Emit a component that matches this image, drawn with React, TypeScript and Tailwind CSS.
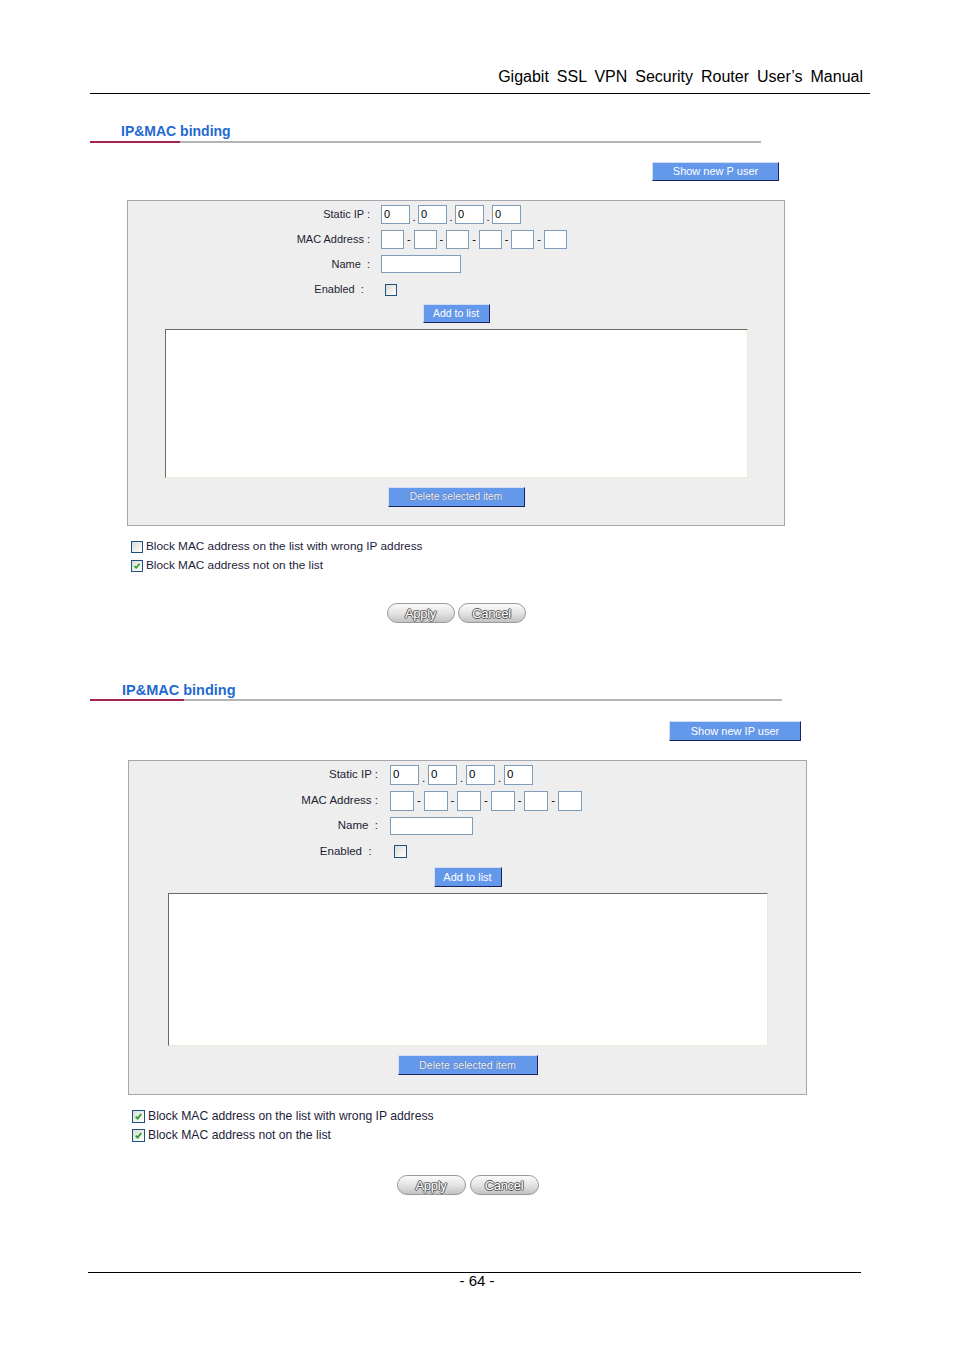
import React from "react";

type Size = {
  title: string;
  titleText: string;
  rule: string;
  red: string;
  showWrap: string;
  showBtn: string;
  showLabel: string;
  panel: string;
  label: string;
  fields: string;
  ipRow: string;
  ip: string;
  ipSep: string;
  macRow: string;
  mac: string;
  macSep: string;
  nameRow: string;
  name: string;
  enRow: string;
  chk: string;
  addWrap: string;
  addBtn: string;
  list: string;
  delWrap: string;
  delBtn: string;
  optWrap: string;
  optRow: string;
  optText: string;
  optBox: string;
  actWrap: string;
  pill: string;
};

const SMALL: Size = {
  title: "mt-[29px] w-[671px]",
  titleText: "pl-[31px] text-[14px]",
  rule: "mt-[2px]",
  red: "w-[90px]",
  showWrap: "mt-[19px] w-[689px]",
  showBtn: "h-[19px] w-[127px] text-[11px]",
  showLabel: "Show new P user",
  panel: "mt-[19px] ml-[127px] w-[658px] h-[326px] pt-[4px]",
  label: "w-[242px] text-[11px]",
  fields: "ml-[11px]",
  ipRow: "h-[19px]",
  ip: "w-[29px] h-[19px] text-[11px]",
  ipSep: "w-[8px] text-[11px]",
  macRow: "mt-[6px] h-[19px]",
  mac: "w-[23px] h-[19px]",
  macSep: "w-[9.6px] text-[11px]",
  nameRow: "mt-[6px] h-[18px]",
  name: "w-[80px] h-[18px]",
  enRow: "mt-[7px] h-[19px]",
  chk: "w-[12px] h-[12px]",
  addWrap: "mt-[5px]",
  addBtn: "h-[19px] w-[67px] text-[10.5px]",
  list: "mt-[6px] w-[583px] h-[149px]",
  delWrap: "mt-[9px]",
  delBtn: "h-[20px] w-[137px] text-[10.2px]",
  optWrap: "mt-[11px] ml-[131px]",
  optRow: "h-[19px] gap-[3px]",
  optText: "text-[11.8px]",
  optBox: "w-[12px] h-[12px]",
  actWrap: "mt-[28px] ml-[127px] w-[658px] gap-[3px]",
  pill: "h-[20px] w-[68px] text-[13px]",
};

const BIG: Size = {
  title: "mt-[59px] w-[692px]",
  titleText: "pl-[32px] text-[14.5px]",
  rule: "mt-[1px]",
  red: "w-[94px]",
  showWrap: "mt-[20px] w-[711px]",
  showBtn: "h-[20px] w-[132px] text-[11px]",
  showLabel: "Show new IP user",
  panel: "mt-[19px] ml-[128px] w-[679px] h-[335px] pt-[4px]",
  label: "w-[249px] text-[11.5px]",
  fields: "ml-[12px]",
  ipRow: "h-[20px]",
  ip: "w-[29px] h-[20px] text-[11.5px]",
  ipSep: "w-[9px] text-[11.5px]",
  macRow: "mt-[6px] h-[20px]",
  mac: "w-[24px] h-[20px]",
  macSep: "w-[9.6px] text-[11.5px]",
  nameRow: "mt-[6px] h-[18px]",
  name: "w-[83px] h-[18px]",
  enRow: "mt-[7px] h-[19px]",
  chk: "w-[13px] h-[13px]",
  addWrap: "mt-[6px]",
  addBtn: "h-[20px] w-[68px] text-[11px]",
  list: "mt-[6px] w-[600px] h-[153px]",
  delWrap: "mt-[9px]",
  delBtn: "h-[20px] w-[140px] text-[10.7px]",
  optWrap: "mt-[12px] ml-[132px]",
  optRow: "h-[19px] gap-[3px]",
  optText: "text-[12.2px]",
  optBox: "w-[13px] h-[13px]",
  actWrap: "mt-[30px] ml-[128px] w-[679px] gap-[4px]",
  pill: "h-[20px] w-[69px] text-[13px]",
};

const Check = ({ cls, checked }: { cls: string; checked?: boolean }) => (
  <span
    className={`relative inline-block shrink-0 border border-[#1c5180] bg-linear-to-br from-[#dcdcd5] to-white ${cls}`}
  >
    {checked && (
      <svg className="absolute inset-0 h-full w-full" viewBox="0 0 12 12">
        <path
          d="M3 6.2 L5 8.3 L9 3.3"
          fill="none"
          stroke="#21a121"
          strokeWidth="1.9"
        />
      </svg>
    )}
  </span>
);

const BlueBtn = ({ cls, children, dim }: { cls: string; children: React.ReactNode; dim?: boolean }) => (
  <button
    type="button"
    className={`flex items-center justify-center border border-t-[#d3def5] border-l-[#d3def5] border-r-[#17245f] border-b-[#17245f] bg-[#6498eb] leading-none ${
      dim ? "text-[#eef1fb] [text-shadow:0_0_1px_#50586e]" : "text-white"
    } ${cls}`}
  >
    {children}
  </button>
);

const Pill = ({ cls, children }: { cls: string; children: React.ReactNode }) => (
  <button
    type="button"
    className={`flex items-center justify-center rounded-full border border-[#9a9a9a] bg-linear-to-b from-[#fbfbfb] via-[#e4e4e4] to-[#c2c2c2] leading-none text-white tracking-[-0.3px] [text-shadow:-1px_0_#5a5a5a,1px_0_#5a5a5a,0_-1px_#5a5a5a,0_1px_#5a5a5a] ${cls}`}
  >
    {children}
  </button>
);

const Box = ({ cls, value }: { cls: string; value?: string }) => (
  <div className={`flex items-center border border-[#7f9db9] bg-white pl-[2px] text-black ${cls}`}>
    {value}
  </div>
);

const Row = ({ s, label, row, children }: { s: Size; label: string; row: string; children: React.ReactNode }) => (
  <div className={`flex items-center ${row}`}>
    <div className={`text-right whitespace-pre text-[#1d1d33] ${s.label}`}>{label}</div>
    <div className={`flex items-center ${s.fields}`}>{children}</div>
  </div>
);

const Section = ({ s, first, second }: { s: Size; first: boolean; second: boolean }) => (
  <div>
    <div className={`ml-[90px] ${s.title}`}>
      <div className={`font-bold leading-[16px] text-[#1f6ad0] ${s.titleText}`}>
        IP&amp;MAC binding
      </div>
      <div className={`flex h-[2px] ${s.rule}`}>
        <div className={`h-full bg-[#a3264a] ${s.red}`} />
        <div className="h-full flex-1 bg-[#b4b4b4]" />
      </div>
    </div>

    <div className={`ml-[90px] flex justify-end ${s.showWrap}`}>
      <BlueBtn cls={s.showBtn}>{s.showLabel}</BlueBtn>
    </div>

    <div className={`border border-[#a6a6ae] bg-[#eeeeee] ${s.panel}`}>
      <Row s={s} label="Static IP :" row={s.ipRow}>
        {[0, 1, 2, 3].map((i) => (
          <React.Fragment key={i}>
            {i > 0 && <span className={`self-end text-center leading-[14px] ${s.ipSep}`}>.</span>}
            <Box cls={s.ip} value="0" />
          </React.Fragment>
        ))}
      </Row>
      <Row s={s} label="MAC Address :" row={s.macRow}>
        {[0, 1, 2, 3, 4, 5].map((i) => (
          <React.Fragment key={i}>
            {i > 0 && <span className={`text-center ${s.macSep}`}>-</span>}
            <Box cls={s.mac} />
          </React.Fragment>
        ))}
      </Row>
      <Row s={s} label="Name  :" row={s.nameRow}>
        <Box cls={s.name} />
      </Row>
      <Row s={s} label="Enabled  :  " row={s.enRow}>
        <span className="ml-[4px] flex">
          <Check cls={s.chk} />
        </span>
      </Row>
      <div className={`flex justify-center ${s.addWrap}`}>
        <BlueBtn cls={s.addBtn}>Add to list</BlueBtn>
      </div>
      <div
        className={`mx-auto border border-t-[#6b6b5f] border-l-[#6b6b5f] border-r-[#ece9d8] border-b-[#ece9d8] bg-white ${s.list}`}
      />
      <div className={`flex justify-center ${s.delWrap}`}>
        <BlueBtn cls={s.delBtn} dim>
          Delete selected item
        </BlueBtn>
      </div>
    </div>

    <div className={s.optWrap}>
      <div className={`flex items-center ${s.optRow}`}>
        <Check cls={s.optBox} checked={first} />
        <span className={`text-[#1d1d3a] ${s.optText}`}>Block MAC address on the list with wrong IP address</span>
      </div>
      <div className={`flex items-center ${s.optRow}`}>
        <Check cls={s.optBox} checked={second} />
        <span className={`text-[#1d1d3a] ${s.optText}`}>Block MAC address not on the list</span>
      </div>
    </div>

    <div className={`flex justify-center ${s.actWrap}`}>
      <Pill cls={s.pill}>Apply</Pill>
      <Pill cls={s.pill}>Cancel</Pill>
    </div>
  </div>
);

export default function App() {
  return (
    <div className="min-h-[1350px] w-[954px] bg-white pt-[68px] font-['Liberation_Sans',Arial,sans-serif] text-black">
      {/* page header */}
      <div className="ml-[90px] w-[780px] border-b border-black pb-[7px] pr-[7px] text-right text-[16px] leading-[18px] [word-spacing:3.5px]">
        Gigabit SSL VPN Security Router User’s Manual
      </div>

      <Section s={SMALL} first={false} second={true} />
      <Section s={BIG} first={true} second={true} />

      {/* page footer */}
      <div className="ml-[88px] mt-[77px] w-[773px] border-t border-black pl-[5px] text-center text-[15px] leading-[16px]">
        - 64 -
      </div>
    </div>
  );
}
